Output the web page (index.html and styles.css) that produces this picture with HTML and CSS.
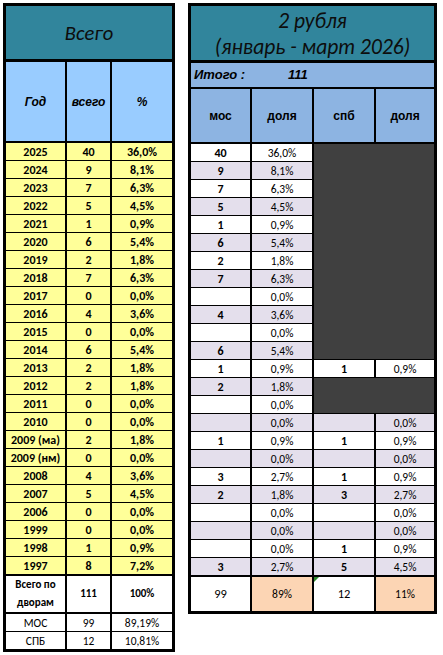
FILE: index.html
```html
<!DOCTYPE html>
<html lang="ru">
<head>
  <meta charset="UTF-8" />
  <title>2 рубля</title>
  <link rel="stylesheet" href="styles.css">
</head>
<body>
  <div class="sheets">
    <table class="sheet sheet-left">
      <colgroup><col style="width:59px"><col style="width:45px"><col style="width:62px"></colgroup>
      <thead>
        <tr class="title"><td colspan="3">Всего</td></tr>
        <tr class="head"><th>Год</th><th>всего</th><th>%</th></tr>
      </thead>
      <tbody class="data">
        <tr><td>2025</td><td>40</td><td>36,0%</td></tr>
        <tr><td>2024</td><td>9</td><td>8,1%</td></tr>
        <tr><td>2023</td><td>7</td><td>6,3%</td></tr>
        <tr><td>2022</td><td>5</td><td>4,5%</td></tr>
        <tr><td>2021</td><td>1</td><td>0,9%</td></tr>
        <tr><td>2020</td><td>6</td><td>5,4%</td></tr>
        <tr><td>2019</td><td>2</td><td>1,8%</td></tr>
        <tr><td>2018</td><td>7</td><td>6,3%</td></tr>
        <tr><td>2017</td><td>0</td><td>0,0%</td></tr>
        <tr><td>2016</td><td>4</td><td>3,6%</td></tr>
        <tr><td>2015</td><td>0</td><td>0,0%</td></tr>
        <tr><td>2014</td><td>6</td><td>5,4%</td></tr>
        <tr><td>2013</td><td>2</td><td>1,8%</td></tr>
        <tr><td>2012</td><td>2</td><td>1,8%</td></tr>
        <tr><td>2011</td><td>0</td><td>0,0%</td></tr>
        <tr><td>2010</td><td>0</td><td>0,0%</td></tr>
        <tr><td>2009 (ма)</td><td>2</td><td>1,8%</td></tr>
        <tr><td>2009 (нм)</td><td>0</td><td>0,0%</td></tr>
        <tr><td>2008</td><td>4</td><td>3,6%</td></tr>
        <tr><td>2007</td><td>5</td><td>4,5%</td></tr>
        <tr><td>2006</td><td>0</td><td>0,0%</td></tr>
        <tr><td>1999</td><td>0</td><td>0,0%</td></tr>
        <tr><td>1998</td><td>1</td><td>0,9%</td></tr>
        <tr class="last"><td>1997</td><td>8</td><td>7,2%</td></tr>
      </tbody>
      <tfoot>
        <tr class="sum"><td>Всего по<br>дворам</td><td>111</td><td>100%</td></tr>
        <tr class="city"><td>МОС</td><td>99</td><td>89,19%</td></tr>
        <tr class="city end"><td>СПБ</td><td>12</td><td>10,81%</td></tr>
      </tfoot>
    </table>

    <table class="sheet sheet-right">
      <colgroup><col style="width:59px"><col style="width:62px"><col style="width:62px"><col style="width:60px"></colgroup>
      <thead>
        <tr class="title"><td colspan="4">2 рубля<br>(январь - март 2026)</td></tr>
        <tr class="itogo"><th colspan="4"><span class="itogo-label">Итого :</span>111</th></tr>
        <tr class="head"><th>мос</th><th>доля</th><th>спб</th><th>доля</th></tr>
      </thead>
      <tbody class="data">
        <tr><td>40</td><td class="pct">36,0%</td><td class="dark" colspan="2" rowspan="12"></td></tr>
        <tr><td>9</td><td class="pct">8,1%</td></tr>
        <tr><td>7</td><td class="pct">6,3%</td></tr>
        <tr><td>5</td><td class="pct">4,5%</td></tr>
        <tr><td>1</td><td class="pct">0,9%</td></tr>
        <tr><td>6</td><td class="pct">5,4%</td></tr>
        <tr><td>2</td><td class="pct">1,8%</td></tr>
        <tr><td>7</td><td class="pct">6,3%</td></tr>
        <tr><td></td><td class="pct">0,0%</td></tr>
        <tr><td>4</td><td class="pct">3,6%</td></tr>
        <tr><td></td><td class="pct">0,0%</td></tr>
        <tr><td>6</td><td class="pct">5,4%</td></tr>
        <tr><td>1</td><td class="pct">0,9%</td><td>1</td><td class="pct">0,9%</td></tr>
        <tr><td>2</td><td class="pct">1,8%</td><td class="dark" colspan="2" rowspan="2"></td></tr>
        <tr><td></td><td class="pct">0,0%</td></tr>
        <tr><td></td><td class="pct">0,0%</td><td></td><td class="pct">0,0%</td></tr>
        <tr><td>1</td><td class="pct">0,9%</td><td>1</td><td class="pct">0,9%</td></tr>
        <tr><td></td><td class="pct">0,0%</td><td></td><td class="pct">0,0%</td></tr>
        <tr><td>3</td><td class="pct">2,7%</td><td>1</td><td class="pct">0,9%</td></tr>
        <tr><td>2</td><td class="pct">1,8%</td><td>3</td><td class="pct">2,7%</td></tr>
        <tr><td></td><td class="pct">0,0%</td><td></td><td class="pct">0,0%</td></tr>
        <tr><td></td><td class="pct">0,0%</td><td></td><td class="pct">0,0%</td></tr>
        <tr><td></td><td class="pct">0,0%</td><td>1</td><td class="pct">0,9%</td></tr>
        <tr class="last"><td>3</td><td class="pct">2,7%</td><td>5</td><td class="pct">4,5%</td></tr>
      </tbody>
      <tfoot>
        <tr class="total"><td>99</td><td class="share">89%</td><td class="flag">12</td><td class="share">11%</td></tr>
      </tfoot>
    </table>
  </div>
</body>
</html>
```

FILE: styles.css
```css
body {
  margin: 0;
  background: #fff;
  color: #000;
  font-family: Carlito, Lato, "Noto Sans", sans-serif;
}

.sheets {
  display: flex;
  align-items: flex-start;
  gap: 13px;
  padding: 3px 0 0 3px;
}

.sheet {
  border-collapse: separate;
  border-spacing: 0;
  border: 3px solid #000;
  table-layout: fixed;
}

.sheet-left {
  width: 172px;
}

.sheet-right {
  width: 249px;
}

.sheet td,
.sheet th {
  box-sizing: border-box;
  height: 18px;
  padding: 0;
  border-left: 2px solid #000;
  border-bottom: 1px solid #000;
  text-align: center;
  vertical-align: middle;
  font-size: 12px;
  font-weight: 700;
  line-height: 14px;
  white-space: nowrap;
}

.sheet td:first-child,
.sheet th:first-child {
  border-left: 0;
}

/* header */
.title td {
  height: 56px;
  border-bottom-width: 3px;
  background: #31859c;
  color: #0d0d0d;
  font-size: 20.5px;
  font-weight: 400;
  font-style: italic;
  line-height: 26px;
}

.sheet-right .title td {
  padding-top: 2px;
  font-size: 21.5px;
}

.head th {
  font-family: "Liberation Sans", Arial, sans-serif;
  font-size: 12px;
  border-bottom-width: 2px;
}

.sheet-left .head th {
  height: 81px;
  background: #99ccff;
  font-style: italic;
}

.sheet-right .head th {
  height: 55px;
  background: #8db4e2;
}

.itogo th {
  height: 26px;
  border-bottom-width: 2px;
  background: #8db4e2;
  text-align: left;
  padding-left: 3px;
  font-family: "Liberation Sans", Arial, sans-serif;
  font-size: 13px;
  font-style: italic;
}

.itogo-label {
  display: inline-block;
  width: 94px;
}

/* data rows */
.sheet-left .data td {
  background: #ffff99;
}

.sheet-right .data td {
  background: #fff;
}

.sheet-right .data tr:nth-child(even) td {
  background: #e4dfec;
}

.sheet-right .data tr td.dark {
  background: #404040;
}

.sheet td.pct {
  font-weight: 400;
  font-size: 11.5px;
}

.data .last td {
  height: 19px;
  border-bottom-width: 2px;
}

/* totals */
.sum td {
  height: 37px;
  border-bottom-width: 2px;
  font-size: 11px;
  line-height: 18px;
}

.city td {
  font-weight: 400;
  font-size: 11.5px;
}

.city.end td {
  height: 17px;
  border-bottom: 0;
}

.total td {
  height: 34px;
  border-bottom: 0;
  font-weight: 400;
  font-size: 12.5px;
}

.total td.share {
  background: #fcd5b4;
  font-size: 11.5px;
}

.total td.flag {
  position: relative;
}

.total td.flag::before {
  content: "";
  position: absolute;
  top: 0;
  left: 0;
  border-top: 5px solid #2d8a2d;
  border-right: 5px solid transparent;
}
```
